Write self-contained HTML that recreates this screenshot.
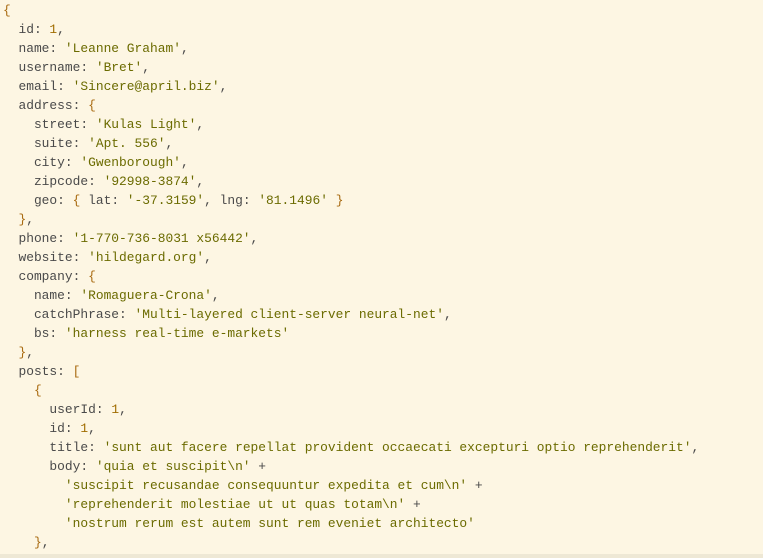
<!DOCTYPE html>
<html><head><meta charset="utf-8"><style>
html,body{margin:0;padding:0;width:763px;height:558px;overflow:hidden;background:#fdf6e3;}
pre{margin:0;padding:0 0 0 3px;position:absolute;top:1px;left:0;font-family:"Liberation Mono",monospace;font-size:12.9px;line-height:19px;color:#4a4a4a;}
.s{color:#6b6b00}.n{color:#a06c00}.b{color:#a86a10}
.bar{position:absolute;left:0;right:0;top:554px;height:4px;background:#eee8d5;}
</style></head><body>
<pre><span class="b">{</span>
  id: <span class="n">1</span>,
  name: <span class="s">'Leanne Graham'</span>,
  username: <span class="s">'Bret'</span>,
  email: <span class="s">'Sincere@april.biz'</span>,
  address: <span class="b">{</span>
    street: <span class="s">'Kulas Light'</span>,
    suite: <span class="s">'Apt. 556'</span>,
    city: <span class="s">'Gwenborough'</span>,
    zipcode: <span class="s">'92998-3874'</span>,
    geo: <span class="b">{</span> lat: <span class="s">'-37.3159'</span>, lng: <span class="s">'81.1496'</span> <span class="b">}</span>
  <span class="b">}</span>,
  phone: <span class="s">'1-770-736-8031 x56442'</span>,
  website: <span class="s">'hildegard.org'</span>,
  company: <span class="b">{</span>
    name: <span class="s">'Romaguera-Crona'</span>,
    catchPhrase: <span class="s">'Multi-layered client-server neural-net'</span>,
    bs: <span class="s">'harness real-time e-markets'</span>
  <span class="b">}</span>,
  posts: <span class="b">[</span>
    <span class="b">{</span>
      userId: <span class="n">1</span>,
      id: <span class="n">1</span>,
      title: <span class="s">'sunt aut facere repellat provident occaecati excepturi optio reprehenderit'</span>,
      body: <span class="s">'quia et suscipit\n'</span> +
        <span class="s">'suscipit recusandae consequuntur expedita et cum\n'</span> +
        <span class="s">'reprehenderit molestiae ut ut quas totam\n'</span> +
        <span class="s">'nostrum rerum est autem sunt rem eveniet architecto'</span>
    <span class="b">}</span>,</pre>
<div class="bar"></div>
</body></html>
